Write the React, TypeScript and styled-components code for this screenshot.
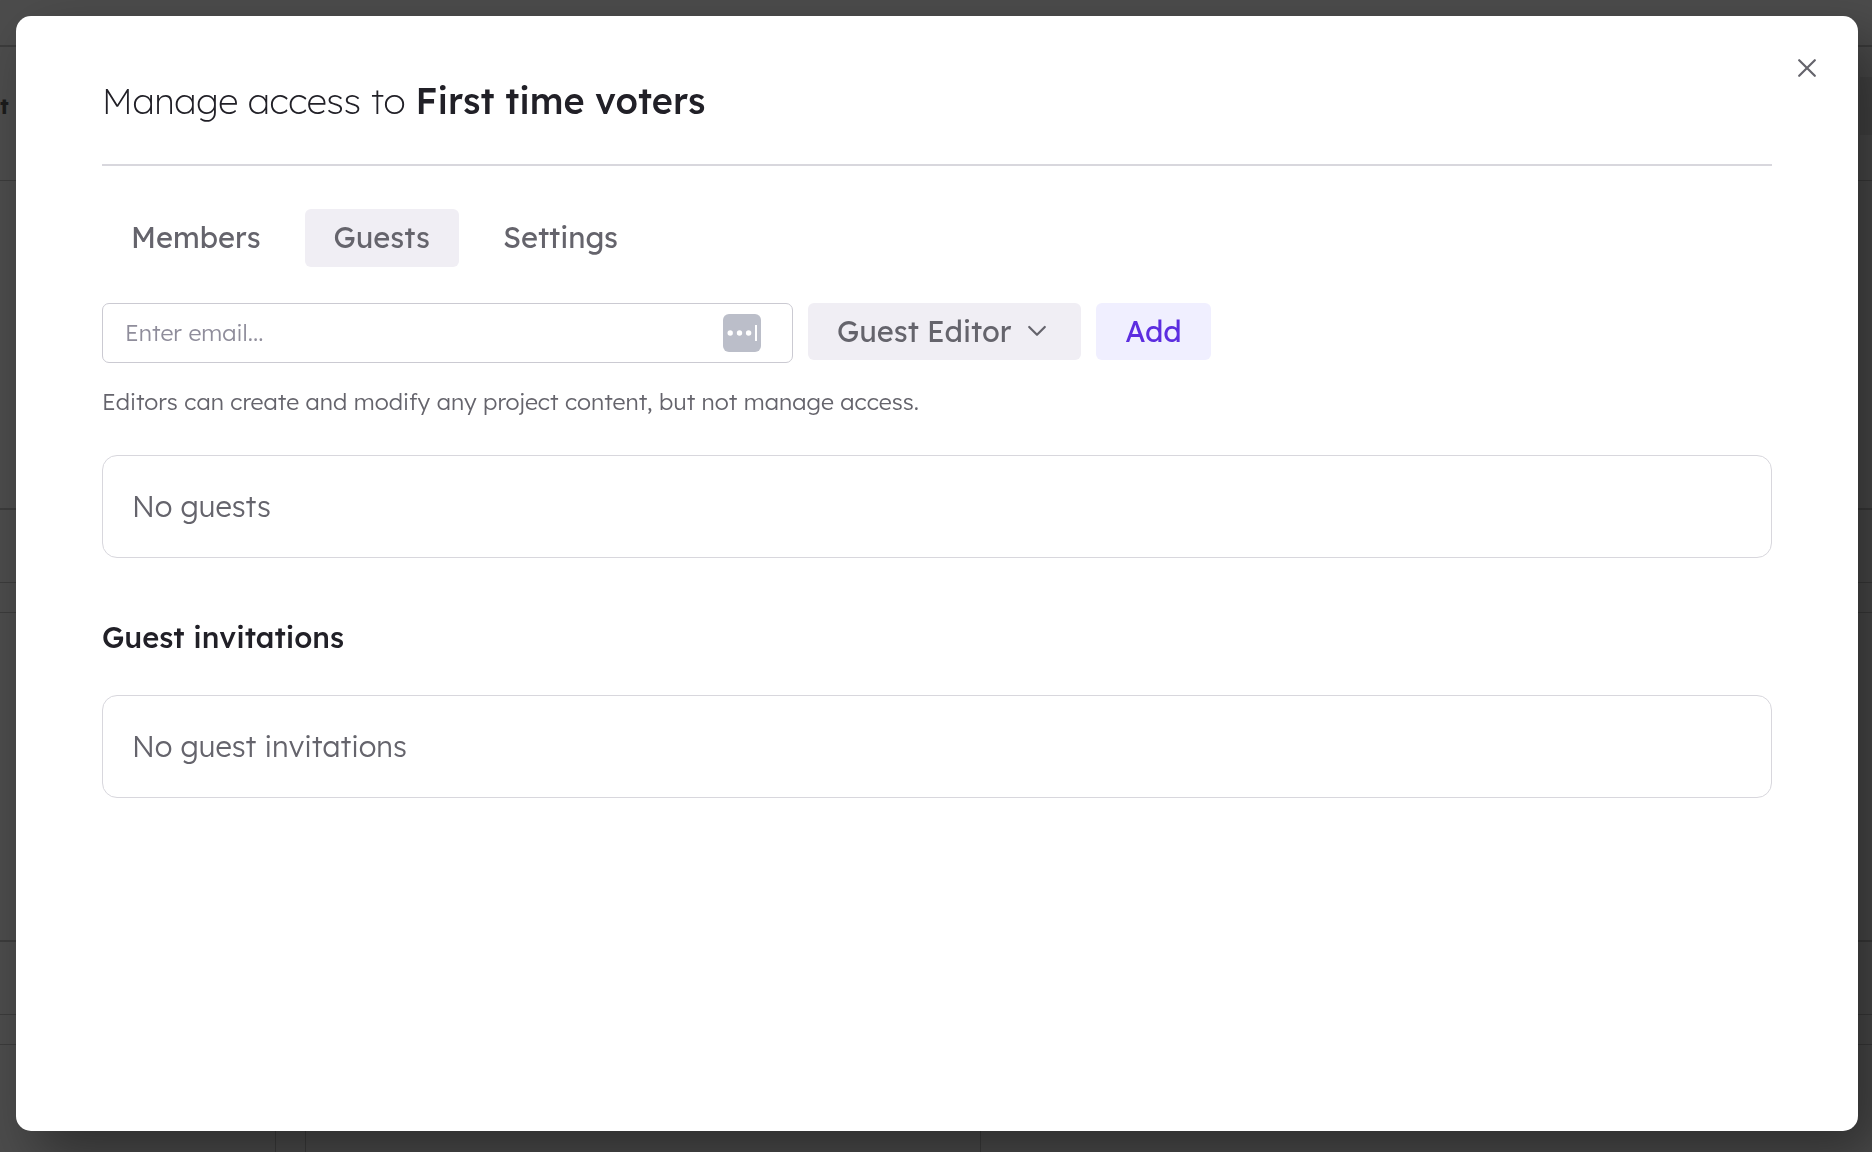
import React, { useState } from "react";
import styled, { createGlobalStyle } from "styled-components";

const GlobalStyle = createGlobalStyle`
  *, *::before, *::after { box-sizing: border-box; }
  html, body, #root { height: 100%; margin: 0; }
  body { overflow: hidden; background: #4c4c4c; }
  body, button, input, select {
    font-family: Lexend, Inter, "Open Sans", sans-serif;
    font-feature-settings: "cv11" 1;
  }
`;

const Page = styled.div`
  display: flex;
  flex-direction: column;
  height: 100vh;
  overflow: hidden;
  background: #4c4c4c;
`;

const PageRow = styled.div<{ $height: number; $line?: number }>`
  display: flex;
  align-items: center;
  justify-content: space-between;
  flex: none;
  height: ${(p) => p.$height}px;
  border-bottom: ${(p) => p.$line ?? 1}px solid #3c3c3c;
`;

const PageColumns = styled.div`
  display: grid;
  grid-template-columns: 276px 30px 675px 1fr;
  flex: 1;
`;

const PageColumn = styled.div`
  border-right: 1px solid #3c3c3c;
`;

const PageLabel = styled.span`
  padding-bottom: 16px;
  font-size: 22px;
  font-weight: 700;
  color: #1c1c1c;
`;

const PageButton = styled.span`
  width: 12px;
  height: 58px;
  margin-bottom: 16px;
  background: #464646;
`;

const Overlay = styled.div`
  position: fixed;
  inset: 0;
  display: flex;
  padding: 16px 14px 21px 16px;
`;

const Dialog = styled.section`
  position: relative;
  flex: 1;
  padding: 60px 86px;
  border-radius: 15px;
  background: #fff;
  box-shadow: 20px 24px 56px rgba(0, 0, 0, 0.4);
`;

const CloseButton = styled.button`
  position: absolute;
  top: 28px;
  right: 27px;
  display: flex;
  align-items: center;
  justify-content: center;
  width: 48px;
  height: 48px;
  padding: 0;
  border: 0;
  background: none;
  color: #65646c;
  cursor: pointer;
`;

const Title = styled.h1`
  margin: 0;
  padding-bottom: 38px;
  border-bottom: 2px solid #d8d7dd;
  font-size: 36px;
  line-height: 50px;
  font-weight: 200;
  color: #212027;

  strong { font-weight: 500; }
`;

const Tabs = styled.nav`
  display: flex;
  gap: 15px;
  margin-top: 43px;
`;

const Tab = styled.button<{ $active: boolean }>`
  height: 58px;
  padding: 0 29px 2px;
  border: 0;
  border-radius: 6px;
  background: ${(p) => (p.$active ? "#f0eef4" : "transparent")};
  font-size: 29px;
  font-weight: 400;
  color: #65646c;
  cursor: pointer;
`;

const InviteForm = styled.form`
  display: flex;
  align-items: flex-start;
  gap: 15px;
  margin-top: 36px;
`;

const EmailField = styled.label`
  display: flex;
  align-items: center;
  flex: 0 1 691px;
  height: 60px;
  padding: 0 31px 0 22px;
  border: 1px solid #cbcad2;
  border-radius: 7px;
`;

const EmailInput = styled.input`
  flex: 1;
  min-width: 0;
  padding: 0 0 2px;
  border: 0;
  outline: 0;
  background: none;
  font-size: 23px;
  font-weight: 300;
  color: #212027;

  &::placeholder { color: #8f8d9b; opacity: 1; }
`;

const RolePicker = styled.label`
  position: relative;
  flex: 0 0 273px;

  svg {
    position: absolute;
    top: 21px;
    right: 34px;
    pointer-events: none;
  }
`;

const RoleSelect = styled.select`
  width: 100%;
  height: 57px;
  padding: 0 64px 2px 29px;
  border: 0;
  border-radius: 6px;
  appearance: none;
  background: #f0eef4;
  font-size: 29px;
  font-weight: 400;
  color: #65646c;
`;

const AddButton = styled.button`
  width: 115px;
  height: 57px;
  padding: 0 0 2px;
  border: 0;
  border-radius: 6px;
  background: #f0efff;
  font-size: 29px;
  font-weight: 400;
  color: #5c2de0;
  cursor: pointer;
`;

const Hint = styled.p`
  margin: 23px 0 0;
  font-size: 23px;
  line-height: 32px;
  font-weight: 300;
  color: #65646c;
`;

const Heading = styled.h2`
  margin: 58px 0 0;
  font-size: 29px;
  line-height: 42px;
  font-weight: 500;
  color: #212027;
`;

const EmptyCard = styled.div`
  margin-top: 37px;
  padding: 30px 29px 31px;
  border: 1px solid #d8d7dd;
  border-radius: 15px;
  font-size: 29px;
  line-height: 40px;
  font-weight: 300;
  color: #65646c;
`;

const CloseIcon = () => (
  <svg width="18" height="18" viewBox="0 0 18 18" fill="none" stroke="currentColor" strokeWidth="2.2" strokeLinecap="round" aria-hidden="true">
    <path d="M1.2 1.2l15.6 15.6M16.8 1.2L1.2 16.8" />
  </svg>
);

const ChevronIcon = () => (
  <svg width="20" height="14" viewBox="0 0 20 14" fill="none" stroke="#65646c" strokeWidth="2.2" strokeLinecap="round" strokeLinejoin="round" aria-hidden="true">
    <path d="M2.2 3L10 10.8 17.8 3" />
  </svg>
);

const AutofillIcon = () => (
  <svg width="38" height="38" viewBox="0 0 38 38" aria-hidden="true">
    <rect width="38" height="38" rx="6" fill="#bbbec9" />
    <g fill="#fff">
      <circle cx="7.2" cy="19" r="2.7" />
      <circle cx="16.5" cy="19" r="2.7" />
      <circle cx="25.6" cy="19" r="2.7" />
      <rect x="32" y="11" width="2" height="16" />
    </g>
  </svg>
);

const TABS = ["Members", "Guests", "Settings"];

export default function App() {
  const [tab, setTab] = useState("Guests");

  return (
    <>
      <GlobalStyle />
      <Page aria-hidden="true">
        <PageRow $height={47} $line={2} />
        <PageRow $height={134}>
          <PageLabel>t</PageLabel>
          <PageButton />
        </PageRow>
        <PageRow $height={329} $line={2} />
        <PageRow $height={73} />
        <PageRow $height={30} />
        <PageRow $height={329} $line={2} />
        <PageRow $height={73} />
        <PageRow $height={30} />
        <PageColumns>
          <PageColumn />
          <PageColumn />
          <PageColumn />
        </PageColumns>
      </Page>
      <Overlay>
        <Dialog role="dialog" aria-modal="true" aria-labelledby="dialog-title">
          <CloseButton type="button" aria-label="Close">
            <CloseIcon />
          </CloseButton>
          <Title id="dialog-title">
            Manage access to <strong>First time voters</strong>
          </Title>
          <Tabs>
            {TABS.map((name) => (
              <Tab key={name} type="button" $active={name === tab} onClick={() => setTab(name)}>
                {name}
              </Tab>
            ))}
          </Tabs>
          <InviteForm onSubmit={(e) => e.preventDefault()}>
            <EmailField>
              <EmailInput type="email" placeholder="Enter email..." aria-label="Email" />
              <AutofillIcon />
            </EmailField>
            <RolePicker>
              <RoleSelect aria-label="Role" defaultValue="Guest Editor">
                <option>Guest Editor</option>
              </RoleSelect>
              <ChevronIcon />
            </RolePicker>
            <AddButton type="submit">Add</AddButton>
          </InviteForm>
          <Hint>Editors can create and modify any project content, but not manage access.</Hint>
          <EmptyCard>No guests</EmptyCard>
          <Heading>Guest invitations</Heading>
          <EmptyCard>No guest invitations</EmptyCard>
        </Dialog>
      </Overlay>
    </>
  );
}
